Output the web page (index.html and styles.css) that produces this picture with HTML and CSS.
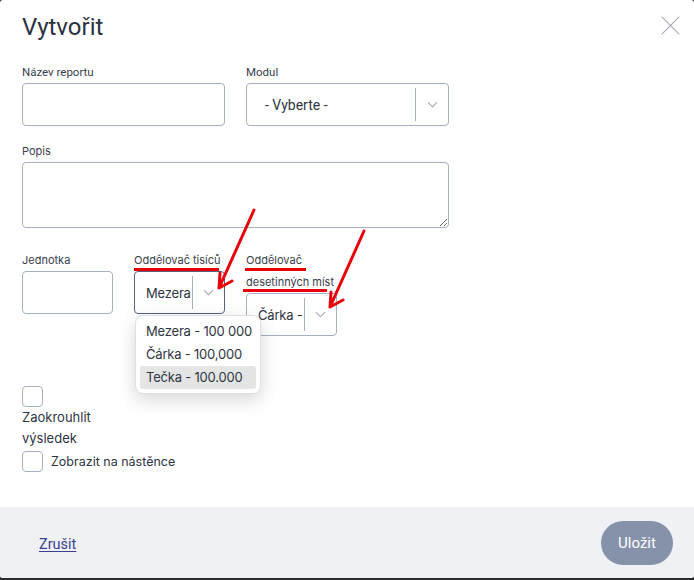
FILE: index.html
```html
<!DOCTYPE html>
<html lang="cs">
<head>
    <meta charset="UTF-8">
    <meta name="viewport" content="width=device-width, initial-scale=1.0">
    <title>Vytvořit</title>
    <link rel="stylesheet" href="styles.css">
</head>
<body>
    <div class="modal">
        <div class="modal-body">
            <h1 class="title">Vytvořit</h1>
            <a class="close" href="#"></a>

            <div class="row row-2">
                <div class="field">
                    <label class="label narrow">Název reportu</label>
                    <input class="input" type="text">
                </div>
                <div class="field">
                    <label class="label narrow">Modul</label>
                    <div class="select">
                        <span class="select-value narrow">- Vyberte -</span>
                        <span class="select-arrow"><i></i></span>
                    </div>
                </div>
            </div>

            <div class="field field-popis">
                <label class="label">Popis</label>
                <textarea class="textarea"></textarea>
            </div>

            <div class="row row-3">
                <div class="field">
                    <label class="label">Jednotka</label>
                    <input class="input input-small" type="text">
                </div>
                <div class="field field-open">
                    <label class="label">Oddělovač tisíců</label>
                    <div class="select select-small focus">
                        <span class="select-value">Mezera</span>
                        <span class="select-arrow"><i></i></span>
                    </div>
                    <ul class="dropdown">
                        <li>Mezera - 100 000</li>
                        <li>Čárka - 100,000</li>
                        <li class="hover">Tečka - 100.000</li>
                    </ul>
                </div>
                <div class="field">
                    <label class="label">Oddělovač desetinných míst</label>
                    <div class="select select-small">
                        <span class="select-value">Čárka - 100,000</span>
                        <span class="select-arrow"><i></i></span>
                    </div>
                </div>
            </div>

            <div class="check check-round">
                <span class="box"></span>
                <span class="check-text">Zaokrouhlit výsledek</span>
            </div>
            <div class="check check-inline">
                <span class="box"></span>
                <span class="check-text">Zobrazit na nástěnce</span>
            </div>
        </div>

        <div class="modal-footer">
            <a class="cancel narrow" href="#">Zrušit</a>
            <button class="save narrow">Uložit</button>
        </div>

        <!-- červené značky -->
        <svg class="marks" width="694" height="580" viewBox="0 0 694 580">
            <g stroke="#e8000b" stroke-width="3" fill="none" stroke-linecap="round" stroke-linejoin="round">
                <path d="M254 210 L219 288 M219 288 L220 273 M219 288 L232 281"/>
                <path d="M364 231 L330 307 M330 307 L331 292 M330 307 L343 300"/>
            </g>
            <g fill="#e8000b">
                <rect x="134" y="268" width="85" height="3"/>
                <rect x="245" y="268" width="61" height="3"/>
                <rect x="243" y="289" width="84" height="3"/>
            </g>
        </svg>
    </div>
</body>
</html>
```

FILE: styles.css
```css
*{
    margin: 0;
    padding: 0;
    box-sizing: border-box;
    list-style: none;
}
body{
    background: #2a2c30;
    font-family: Inter, "Noto Sans", sans-serif;
    color: #2e3542;
}
.narrow{
    font-family: Roboto, "Liberation Sans", sans-serif;
}
.modal{
    position: relative;
    width: 694px;
    height: 578px;
    background: #fff;
    border-radius: 3px;
    overflow: hidden;
    display: flex;
    flex-direction: column;
}
.modal-body{
    flex: 1;
    padding: 11px 22px 0 22px;
}
.title{
    font-family: Roboto, "Liberation Sans", sans-serif;
    font-weight: 400;
    font-size: 24px;
    line-height: 32px;
    color: #2b3240;
    margin-bottom: 18px;
}
.close{
    position: absolute;
    top: 17px;
    right: 15px;
    width: 18px;
    height: 18px;
}
.close:before,
.close:after{
    content: '';
    position: absolute;
    left: -3px;
    top: 8px;
    width: 25px;
    height: 1px;
    background: #a3a8b1;
    transform: rotate(45deg);
}
.close:after{
    transform: rotate(-45deg);
}
.row{
    display: flex;
    gap: 21px;
}
.row-2 .field{
    width: 203px;
}
.row-3{
    margin-top: 21px;
    align-items: flex-start;
}
.row-3 .field{
    width: 91px;
}
.field{
    display: flex;
    flex-direction: column;
}
.field-popis{
    margin-top: 14px;
    width: 427px;
}
.field-open{
    position: relative;
}
.label{
    font-size: 11px;
    line-height: 22px;
    color: #3a404c;
}
.row-2 .label{
    font-size: 11.5px;
}
.input{
    height: 43px;
    border: 1px solid #a6afc4;
    border-radius: 4px;
    outline: none;
    background: #fff;
}
.textarea{
    height: 66px;
    border: 1px solid #a6afc4;
    border-radius: 4px;
    outline: none;
    resize: vertical;
}
.select{
    height: 43px;
    border: 1px solid #a6afc4;
    border-radius: 4px;
    display: flex;
    align-items: center;
    background: #fff;
}
.select.focus{
    border-color: #55637f;
}
.select-value{
    flex: 1;
    min-width: 0;
    overflow: hidden;
    white-space: nowrap;
    font-size: 14px;
    padding-left: 18px;
    color: #2e3542;
}
.select-small .select-value{
    padding-left: 11px;
    font-size: 13px;
    letter-spacing: -0.2px;
}
.select-arrow{
    width: 33px;
    align-self: stretch;
    margin: 4px 0;
    border-left: 1px solid #a6afc4;
    display: flex;
    align-items: center;
    justify-content: center;
}
.select-small .select-arrow{
    width: 32px;
}
.select-arrow i{
    display: block;
    width: 7px;
    height: 7px;
    border-right: 1px solid #a0a7b4;
    border-bottom: 1px solid #a0a7b4;
    transform: translateY(-2px) rotate(45deg);
}
.dropdown{
    position: absolute;
    top: 66px;
    left: 1px;
    width: 126px;
    padding: 4px;
    background: #fff;
    border: 1px solid #dedfe3;
    border-radius: 8px;
    box-shadow: 0 6px 18px rgba(0,0,0,0.16);
    z-index: 2;
}
.dropdown li{
    height: 23px;
    line-height: 23px;
    padding-left: 6px;
    font-size: 13px;
    letter-spacing: -0.2px;
    white-space: nowrap;
    border-radius: 2px;
}
.dropdown li.hover{
    background: #e5e5e5;
}
.box{
    display: inline-block;
    width: 21px;
    height: 21px;
    border: 1px solid #a6afc4;
    border-radius: 4px;
    background: #fff;
}
.check{
    font-size: 13px;
    line-height: 21px;
    color: #2e3542;
}
.check-round{
    margin-top: 50px;
    width: 80px;
    display: flex;
    flex-direction: column;
}
.check-inline{
    margin-top: 2px;
    display: flex;
    align-items: center;
    gap: 8px;
    font-size: 12.5px;
}
.modal-footer{
    height: 71px;
    background: #eff1f5;
    display: flex;
    align-items: center;
    justify-content: space-between;
    padding: 0 21px 0 39px;
}
.cancel{
    font-size: 14.5px;
    color: #3b3f8e;
    text-decoration: underline;
    text-underline-offset: 2px;
    margin-top: 3px;
}
.save{
    width: 72px;
    height: 44px;
    border: none;
    border-radius: 22px;
    background: #8692aa;
    color: #fff;
    font-size: 15px;
}
.marks{
    position: absolute;
    top: 0;
    left: 0;
    pointer-events: none;
    z-index: 3;
}
```
